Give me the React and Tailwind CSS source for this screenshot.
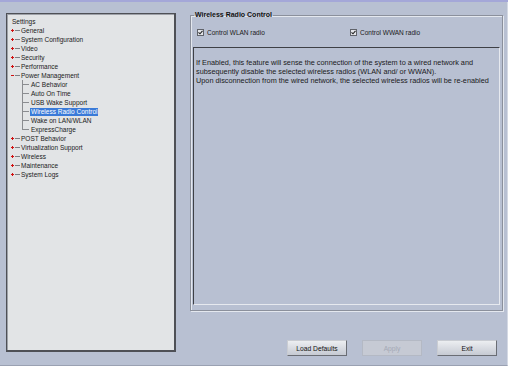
import React from "react";

function Expander({ open }) {
  return (
    <svg width="3" height="3" viewBox="0 0 3 3" className="shrink-0">
      <rect x="0" y="1" width="3" height="1" fill="#d01010" />
      {!open && <rect x="1" y="0" width="1" height="3" fill="#d01010" />}
    </svg>
  );
}

function TopRow({ label, open }) {
  return (
    <div className="flex items-center h-[9px] pl-[3px]">
      <Expander open={open} />
      <div className="ml-[1px] w-[5px] h-px bg-[#7d7f84] mr-[1px]" />
      <span className="leading-[9px] whitespace-nowrap">{label}</span>
    </div>
  );
}

function ChildRow({ label, selected, last }) {
  return (
    <div className="flex items-center h-[9px] pl-[14px] relative">
      <div className={"absolute left-[14px] top-0 w-px bg-[#8a8c90] " + (last ? "h-[5px]" : "h-[9px]")} />
      <div className="w-[7px] h-px bg-[#8a8c90] mr-[1px]" />
      <span
        className={
          "leading-[8px] whitespace-nowrap px-[1px] " +
          (selected ? "bg-[#3a7ad8] text-white" : "")
        }
      >
        {label}
      </span>
    </div>
  );
}

function Check({ label, className }) {
  return (
    <div className={"flex items-center gap-[3px] " + (className || "")}>
      <div className="w-[7px] h-[7px] border border-[#60636a] bg-[#e4e6ea] flex items-center justify-center">
        <svg width="5" height="5" viewBox="0 0 5 5">
          <path d="M0.5 2.3 L2 3.8 L4.5 0.8" stroke="#222" strokeWidth="1.1" fill="none" />
        </svg>
      </div>
      <span className="leading-[9px] text-[6.5px]">{label}</span>
    </div>
  );
}

function Btn({ children, disabled }) {
  return (
    <div
      className={
        "w-[60px] h-[16px] flex items-center justify-center border " +
        (disabled
          ? "border-[#b4b9c4] bg-[#c6cad4] text-[#a4a9b4]"
          : "border-t-[#c9ccd2] border-l-[#c9ccd2] border-b-[#6a6d74] border-r-[#6a6d74] bg-gradient-to-b from-[#eceef1] to-[#c6cad3] text-[#111]")
      }
    >
      <span className="leading-[9px] text-[6.7px]">{children}</span>
    </div>
  );
}

export default function App() {
  return (
    <div className="w-[508px] h-[366px] bg-[#b8c0d2] flex flex-col overflow-hidden font-['Liberation_Sans',Arial,sans-serif] text-[6.5px] text-[#1a1a1a]">
      <div className="h-[2px] bg-[#a4a7d8] shrink-0" />
      <div className="flex flex-1 border-r border-r-[#d4d9e4] border-b border-b-[#9aa1b2]">
        {/* Tree panel */}
        <div className="ml-[6px] mt-[11px] w-[170px] h-[339px] border border-[#4e5056] border-b-2 border-r-2 bg-[#e2e4e6] shadow-[inset_1px_1px_0_#9ea1a8]">
          <div className="pt-[3px] pl-[1px]">
            <div className="h-[9px] pl-[4px] leading-[9px]">Settings</div>
            <TopRow label="General" />
            <TopRow label="System Configuration" />
            <TopRow label="Video" />
            <TopRow label="Security" />
            <TopRow label="Performance" />
            <TopRow label="Power Management" open />
            <ChildRow label="AC Behavior" />
            <ChildRow label="Auto On Time" />
            <ChildRow label="USB Wake Support" />
            <ChildRow label="Wireless Radio Control" selected />
            <ChildRow label="Wake on LAN/WLAN" />
            <ChildRow label="ExpressCharge" last />
            <TopRow label="POST Behavior" />
            <TopRow label="Virtualization Support" />
            <TopRow label="Wireless" />
            <TopRow label="Maintenance" />
            <TopRow label="System Logs" />
          </div>
        </div>

        {/* Right column */}
        <div className="ml-[14px] w-[313px] flex flex-col">
          <fieldset className="mt-[9px] border border-[#8b909c] shadow-[1px_1px_0_#e4e8ef,inset_1px_1px_0_#e4e8ef] px-[2px] pb-[5px]">
            <legend className="ml-[1px] px-[1px] font-bold text-[7px] leading-[8px] text-[#111]">
              Wireless Radio Control
            </legend>
            <div className="flex items-center mt-[9px] pl-[4px] h-[9px]">
              <Check label="Control WLAN radio" className="w-[153px]" />
              <Check label="Control WWAN radio" />
            </div>
            <div className="mt-[10px] h-[258px] border border-t-[#3e4046] border-l-[#3e4046] border-b-[#e6e9ef] border-r-[#e6e9ef] pl-[2px] pt-[10px] leading-[9px] text-[7.3px]">
              <div className="whitespace-nowrap">If Enabled, this feature will sense the connection of the system to a wired network and</div>
              <div className="whitespace-nowrap">subsequently disable the selected wireless radios (WLAN and/ or WWAN).</div>
              <div className="whitespace-nowrap">Upon disconnection from the wired network, the selected wireless radios will be re-enabled</div>
            </div>
          </fieldset>
          <div className="mt-[29px] flex justify-end gap-[15px] pr-[6px]">
            <Btn>Load Defaults</Btn>
            <Btn disabled>Apply</Btn>
            <Btn>Exit</Btn>
          </div>
        </div>
      </div>
    </div>
  );
}
